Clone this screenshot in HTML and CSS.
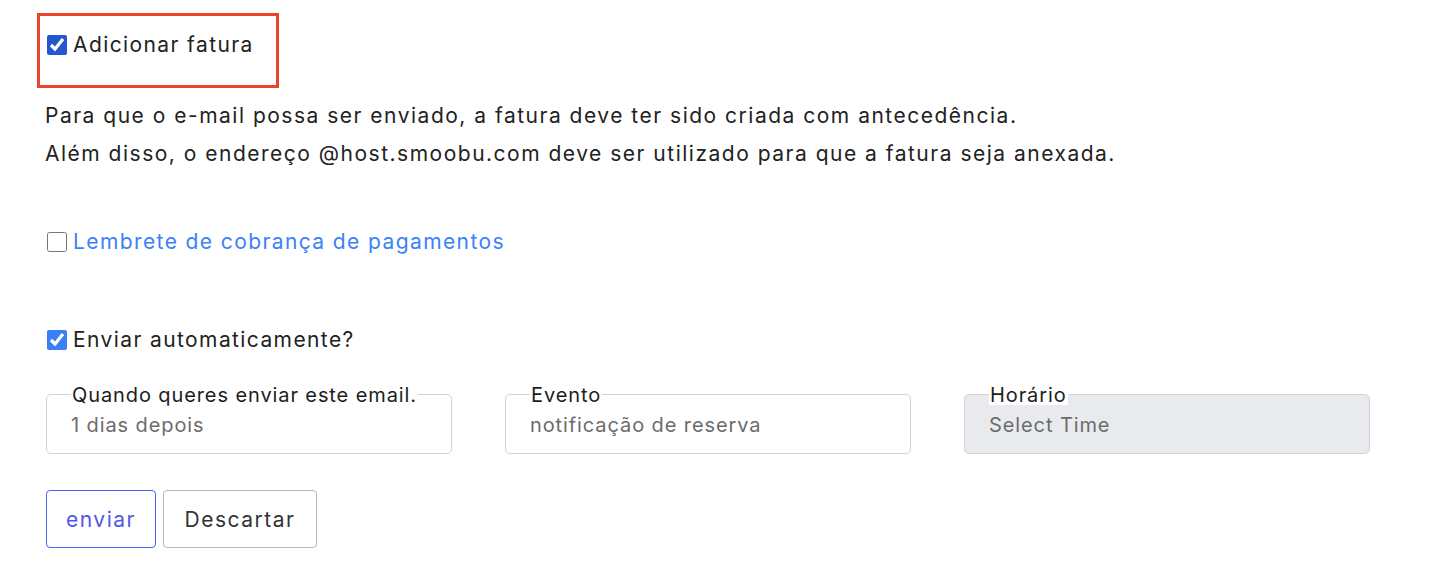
FILE: index.html
```html
<!DOCTYPE html>
<html lang="pt">
<head>
<meta charset="utf-8">
<link rel="stylesheet" href="styles.css">
</head>
<body>
<div class="page">
  <div class="highlight">
    <label class="check">
      <input type="checkbox" class="cb cb-dark" checked>
      <span>Adicionar fatura</span>
    </label>
  </div>
  <p class="info">Para que o e-mail possa ser enviado, a fatura deve ter sido criada com antecedência.<br>Além disso, o endereço @host.smoobu.com deve ser utilizado para que a fatura seja anexada.</p>
  <label class="check reminder">
    <input type="checkbox" class="cb">
    <span class="link">Lembrete de cobrança de pagamentos</span>
  </label>
  <label class="check auto">
    <input type="checkbox" class="cb cb-light" checked>
    <span>Enviar automaticamente?</span>
  </label>
  <div class="fields">
    <div class="field">
      <span class="field-label">Quando queres enviar este email.</span>
      <span class="field-value">1 dias depois</span>
    </div>
    <div class="field">
      <span class="field-label">Evento</span>
      <span class="field-value">notificação de reserva</span>
    </div>
    <div class="field disabled">
      <span class="field-label">Horário</span>
      <span class="field-value">Select Time</span>
    </div>
  </div>
  <div class="actions">
    <button class="btn btn-primary">enviar</button>
    <button class="btn btn-secondary">Descartar</button>
  </div>
</div>
</body>
</html>
```
FILE: styles.css
```css
* { box-sizing: border-box; }
body {
  margin: 0;
  background: #fff;
  font-family: Inter, "Noto Sans", sans-serif;
  color: #222;
}
.page {
  padding: 13px 0 0 37px;
  display: flex;
  flex-direction: column;
  align-items: flex-start;
}
.highlight {
  width: 242px;
  height: 75px;
  border: 3px solid #e8432d;
  padding: 17px 0 0 7px;
}
.check {
  display: flex;
  align-items: center;
  gap: 6px;
  font-size: 21px;
  line-height: 24px;
  letter-spacing: 1.4px;
  color: #222;
}
.cb {
  width: 20px;
  height: 20px;
  margin: 0;
  flex: none;
}
.cb-dark { accent-color: #2456cf; }
.cb-light { accent-color: #3a7ff6; }
.info {
  margin: 9px 0 0 8px;
  font-size: 21px;
  line-height: 38px;
  letter-spacing: 1.5px;
  color: #222;
}
.reminder { margin: 57px 0 0 10px; }
.link { color: #3b82f6; }
.auto { margin: 74px 0 0 10px; }
.fields {
  margin: 42px 0 0 9px;
  display: grid;
  grid-template-columns: repeat(3, 406px);
  column-gap: 53px;
}
.field {
  position: relative;
  height: 60px;
  border: 1.5px solid #cfd3d8;
  border-radius: 5px;
  padding: 18px 0 0 24px;
  background: #fff;
}
.field.disabled { background: #e9eaee; }
.field-label {
  position: absolute;
  top: -9px;
  left: 24px;
  background: #fff;
  font-size: 20px;
  line-height: 19px;
  letter-spacing: 0.9px;
  color: #1d1d1d;
  padding: 0 1px;
}
.field-value {
  font-size: 20px;
  letter-spacing: 0.9px;
  color: #6c6c6c;
}
.actions {
  margin: 36px 0 0 9px;
  display: flex;
  gap: 7px;
}
.btn {
  height: 58px;
  font-family: inherit;
  font-size: 21px;
  letter-spacing: 1.5px;
  background: #fff;
  border-radius: 4px;
  padding: 0;
  cursor: pointer;
}
.btn-primary {
  border: 1.5px solid #5160f5;
  color: #5256ea;
  width: 110px;
}
.btn-secondary {
  border: 1.5px solid #b8b8b8;
  color: #333;
  width: 154px;
}
```
